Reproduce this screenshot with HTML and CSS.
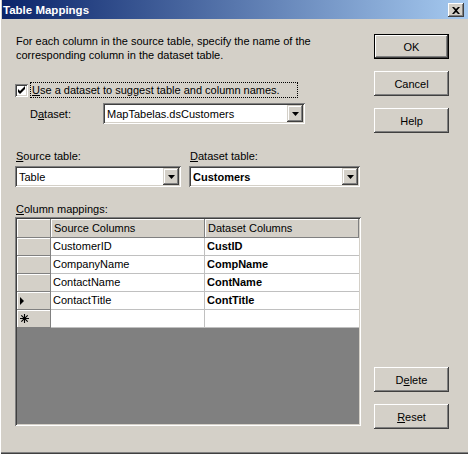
FILE: index.html
```html
<!DOCTYPE html>
<html>
<head>
<meta charset="utf-8">
<link rel="stylesheet" href="styles.css">
</head>
<body>
<div class="window">
  <div class="titlebar">
    <span class="title">Table Mappings</span>
    <span class="close"><svg width="8" height="7" viewBox="0 0 8 7"><path d="M0 0h2l2 2 2-2h2L5 3.5 8 7H6L4 5 2 7H0l3-3.5z" fill="#000"/></svg></span>
  </div>
  <div class="content">
    <div class="main">
      <p class="desc">For each column in the source table, specify the name of the<br>corresponding column in the dataset table.</p>
      <div class="check-row">
        <span class="checkbox"><svg width="9" height="9" viewBox="0 0 9 9"><path d="M1 3v3l2 2 5-5V0L3 5z" fill="#000"/></svg></span>
        <span class="check-label"><u>U</u>se a dataset to suggest table and column names.</span>
      </div>
      <div class="dataset-row">
        <span class="ds-label">D<u>a</u>taset:</span>
        <div class="combo combo-ds"><span class="combo-text">MapTabelas.dsCustomers</span><span class="drop"><svg width="7" height="4" viewBox="0 0 7 4"><path d="M0 0h7L3.5 4z" fill="#000"/></svg></span></div>
      </div>
      <div class="tables">
        <div class="field field-src">
          <div class="lbl"><u>S</u>ource table:</div>
          <div class="combo"><span class="combo-text">Table</span><span class="drop"><svg width="7" height="4" viewBox="0 0 7 4"><path d="M0 0h7L3.5 4z" fill="#000"/></svg></span></div>
        </div>
        <div class="field field-dst">
          <div class="lbl"><u>D</u>ataset table:</div>
          <div class="combo"><span class="combo-text bold">Customers</span><span class="drop"><svg width="7" height="4" viewBox="0 0 7 4"><path d="M0 0h7L3.5 4z" fill="#000"/></svg></span></div>
        </div>
      </div>
      <div class="lbl map-lbl"><u>C</u>olumn mappings:</div>
      <div class="grid">
        <div class="rows">
          <div class="rh hdr"></div><div class="ch">Source Columns</div><div class="ch last">Dataset Columns</div>
          <div class="rh"></div><div class="cell">CustomerID</div><div class="cell bold last">CustID</div>
          <div class="rh"></div><div class="cell">CompanyName</div><div class="cell bold last">CompName</div>
          <div class="rh"></div><div class="cell">ContactName</div><div class="cell bold last">ContName</div>
          <div class="rh"><svg width="4" height="8" viewBox="0 0 4 8"><path d="M0 0l4 4-4 4z" fill="#000"/></svg></div><div class="cell">ContactTitle</div><div class="cell bold last">ContTitle</div>
          <div class="rh"><svg width="9" height="9" viewBox="0 0 9 9"><path d="M4.5 0v9M0 4.5h9M1.3 1.3l6.4 6.4M7.7 1.3l-6.4 6.4" stroke="#000" stroke-width="1.1" fill="none"/></svg></div><div class="cell"></div><div class="cell last"></div>
        </div>
      </div>
    </div>
    <div class="buttons">
      <button class="btn default">OK</button>
      <button class="btn">Cancel</button>
      <button class="btn">Help</button>
      <div class="spacer"></div>
      <button class="btn">D<u>e</u>lete</button>
      <button class="btn"><u>R</u>eset</button>
    </div>
  </div>
</div>
</body>
</html>
```

FILE: styles.css
```css
* { box-sizing: border-box; }
html, body { margin: 0; padding: 0; background: #d4d0c8; }
body { font-family: "Liberation Sans", Arial, sans-serif; font-size: 11px; color: #000; }

.window {
  width: 468px;
  height: 454px;
  background: #d4d0c8;
  display: flex;
  flex-direction: column;
  padding: 0 0 2px 2px;
  box-shadow: inset 1px 0 0 #ffffff, inset 0 -1px 0 #404040, inset 0 -2px 0 #808080;
  overflow: hidden;
}

.titlebar {
  height: 19px;
  flex: none;
  background: linear-gradient(to right, #0a246a, #a6caf0);
  display: flex;
  align-items: center;
  justify-content: space-between;
  padding: 0 4px 0 1px;
}
.title { color: #fff; font-weight: bold; font-size: 11.5px; }
.close {
  width: 16px; height: 14px;
  background: #d4d0c8;
  display: flex; align-items: center; justify-content: center;
  box-shadow: inset -1px -1px 0 #404040, inset 1px 1px 0 #ffffff, inset -2px -2px 0 #808080;
  margin-top: 1px;
}

.content {
  flex: 1;
  display: flex;
  padding: 15px 0 0 13px;
}
.main { width: 346px; display: flex; flex-direction: column; }

.desc { margin: 0 0 0 1px; line-height: 14px; height: 28px; }

.check-row { display: flex; align-items: center; margin-top: 20px; height: 16px; }
.checkbox {
  width: 13px; height: 13px; background: #fff;
  display: flex; align-items: center; justify-content: center;
  box-shadow: inset 1px 1px 0 #808080, inset -1px -1px 0 #ffffff, inset 2px 2px 0 #404040, inset -2px -2px 0 #d4d0c8;
}
.check-label {
  margin-left: 2px;
  padding: 0 2px 0 1px;
  height: 16px;
  line-height: 14px;
  border: 1px dotted #000;
  width: 268px;
}

.dataset-row { display: flex; align-items: center; margin-top: 5px; height: 21px; }
.ds-label { width: 88px; padding-left: 15px; }
.combo {
  height: 21px;
  background: #fff;
  display: flex;
  align-items: center;
  justify-content: space-between;
  padding: 2px;
  box-shadow: inset 1px 1px 0 #808080, inset -1px -1px 0 #ffffff, inset 2px 2px 0 #404040, inset -2px -2px 0 #d4d0c8;
}
.combo-ds { width: 202px; }
.combo-text { padding-left: 2px; font-size: 11px; }
.drop {
  width: 16px; height: 17px;
  background: #d4d0c8;
  display: flex; align-items: center; justify-content: center;
  box-shadow: inset -1px -1px 0 #404040, inset 1px 1px 0 #d4d0c8, inset -2px -2px 0 #808080, inset 2px 2px 0 #ffffff;
}
.bold { font-weight: bold; }

.tables { display: flex; margin-top: 25px; }
.field { display: flex; flex-direction: column; }
.field-src { width: 166px; }
.field-dst { width: 171px; margin-left: 8px; }
.lbl { height: 14px; line-height: 14px; margin-bottom: 3px; padding-left: 1px; }
.map-lbl { margin-top: 15px; margin-bottom: 1px; }

.grid {
  height: 209px;
  background: #808080;
  padding: 2px;
  box-shadow: inset 1px 1px 0 #808080, inset -1px -1px 0 #ffffff, inset 2px 2px 0 #404040, inset -2px -2px 0 #d4d0c8;
}
.rows {
  display: grid;
  grid-template-columns: 34px 154px 154px;
  grid-template-rows: 19px repeat(5, 18px);
}
.rh {
  background: #d4d0c8;
  border-right: 1px solid #808080;
  border-bottom: 1px solid #808080;
  box-shadow: inset 1px 1px 0 #ffffff;
  display: flex; align-items: center; padding-left: 3px;
}
.ch {
  background: #d4d0c8;
  border-right: 1px solid #808080;
  border-bottom: 1px solid #808080;
  box-shadow: inset 1px 1px 0 #ffffff;
  padding-left: 3px;
  line-height: 18px;
}
.cell {
  background: #fff;
  border-right: 1px solid #c0c0c0;
  border-bottom: 1px solid #c0c0c0;
  padding-left: 2px;
  line-height: 17px;
}
.cell.last { border-right: none; }

.buttons {
  display: flex;
  flex-direction: column;
  margin-left: 13px;
  padding-bottom: 23px;
}
.btn {
  width: 75px; height: 25px;
  margin: 0 0 12px 0;
  background: #d4d0c8;
  border: none;
  font-family: "Liberation Sans", Arial, sans-serif;
  font-size: 11px;
  color: #000;
  padding: 0;
  box-shadow: inset -1px -1px 0 #404040, inset 1px 1px 0 #ffffff, inset -2px -2px 0 #808080, inset 2px 2px 0 #d4d0c8;
}
.btn.default {
  box-shadow: inset 0 0 0 1px #000, inset -2px -2px 0 #404040, inset 2px 2px 0 #ffffff, inset -3px -3px 0 #808080;
}
.spacer { flex: 1; }
.buttons .btn:last-child { margin-bottom: 0; }
```
